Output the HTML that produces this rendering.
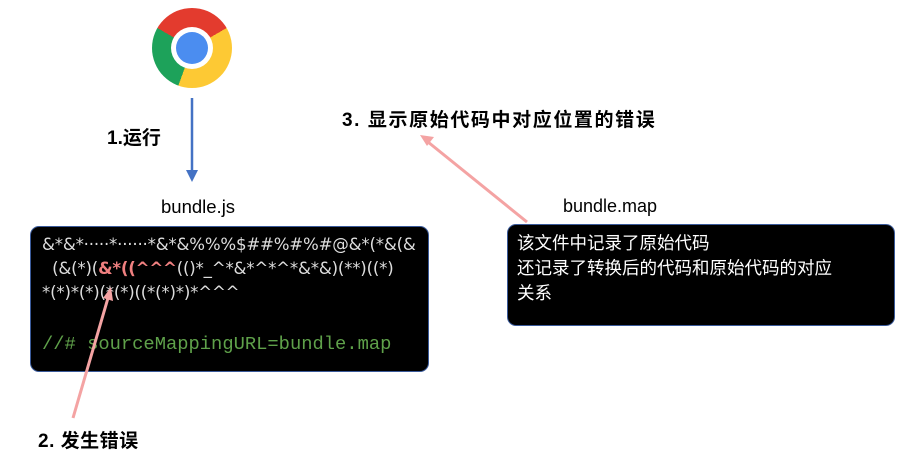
<!DOCTYPE html><html><head><meta charset="utf-8"><style>
body{margin:0;width:906px;height:465px;background:#fff;position:relative;overflow:hidden;font-family:"Liberation Sans","Noto Sans CJK SC",sans-serif}
.a{position:absolute}
.box{position:absolute;background:#000;border:1px solid #3a5a9a;border-radius:9px}
.code{color:#ddd;font-family:"DejaVu Sans","Noto Sans CJK SC",sans-serif;font-size:16.6px;line-height:24px;white-space:pre;letter-spacing:-0.2px}
</style></head><body>
<div class="a" style="left:152px;top:8px;width:80px;height:80px;border-radius:50%;background:conic-gradient(from 0deg,#e33b2e 0deg 60deg,#fdc934 60deg 200deg,#1da25a 200deg 300deg,#e33b2e 300deg 360deg)"></div>
<div class="a" style="left:171px;top:27px;width:42px;height:42px;border-radius:50%;background:#fff"></div>
<div class="a" style="left:176px;top:32px;width:32px;height:32px;border-radius:50%;background:#4b8df0"></div>
<div class="a" style="left:107px;top:123px;font-size:19px;font-weight:bold">1.运行</div>
<div class="a" style="left:342px;top:105px;font-size:19px;font-weight:bold;letter-spacing:1.6px">3. 显示原始代码中对应位置的错误</div>
<div class="a" style="left:38px;top:426px;font-size:19px;font-weight:bold;letter-spacing:0.5px">2. 发生错误</div>
<div class="a" style="left:161px;top:196px;font-size:18.5px">bundle.js</div>
<div class="a" style="left:563px;top:196px;font-size:18px">bundle.map</div>
<div class="box" style="left:30px;top:226px;width:397px;height:144px"></div>
<div class="a code" style="left:42px;top:233px">&amp;*&amp;*·····*······*&amp;*&amp;%%%$##%#%#@&amp;*(*&amp;(&amp;
  (&amp;(*)(<b style="color:#f08080">&amp;*((^^^</b>(()*_^*&amp;*^*^*&amp;*&amp;)(**)((*)
*(*)*(*)(*(*)((*(*)*)*^^^</div>
<div class="a" style="left:42px;top:333px;color:#5fa14a;font-family:'Liberation Mono',monospace;font-size:18.8px">//# sourceMappingURL=bundle.map</div>
<div class="box" style="left:507px;top:224px;width:386px;height:100px"></div>
<div class="a" style="left:517px;top:231px;color:#fff;font-size:17.5px;line-height:25px">该文件中记录了原始代码<br>还记录了转换后的代码和原始代码的对应<br>关系</div>
<svg class="a" style="left:0;top:0" width="906" height="465">
<line x1="192" y1="98" x2="192" y2="172" stroke="#4472c4" stroke-width="2.5"/>
<polygon points="186,170 198,170 192,182" fill="#4472c4"/>
<line x1="527" y1="222" x2="428" y2="142" stroke="#f4a3a3" stroke-width="3"/>
<polygon points="420,135 434,137 427,146" fill="#f4a3a3"/>
<line x1="73" y1="418" x2="108" y2="298" stroke="#f4a3a3" stroke-width="3"/>
<polygon points="111,287 113,301 103,298" fill="#f4a3a3"/>
</svg>
</body></html>
